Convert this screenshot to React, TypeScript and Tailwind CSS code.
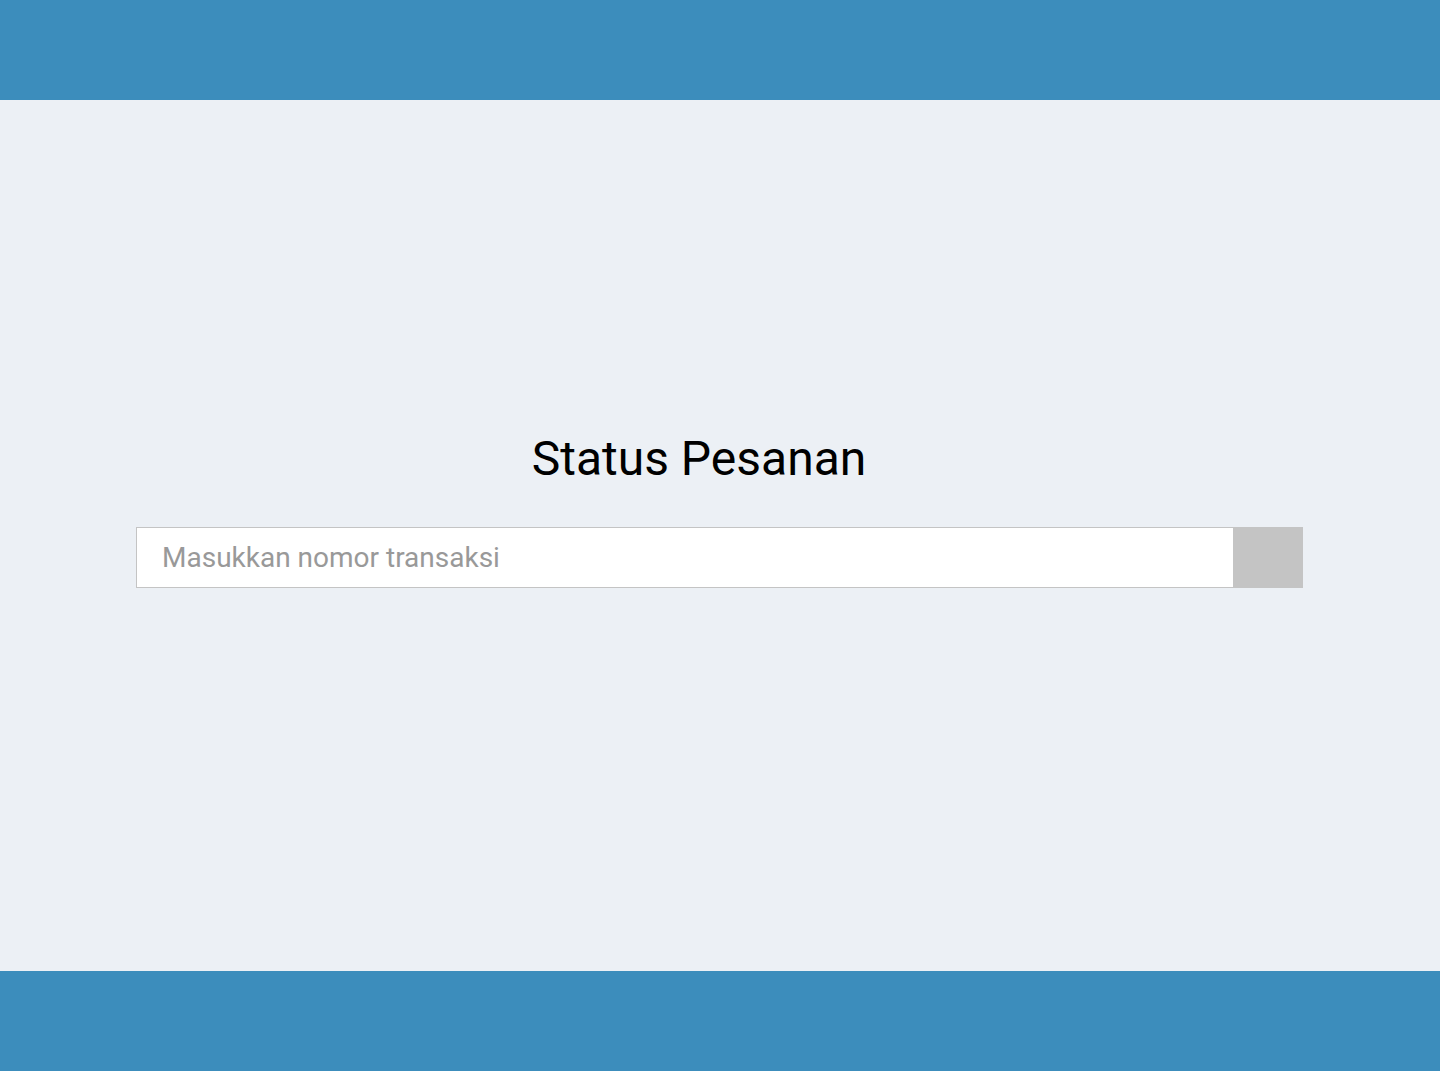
import React from "react";

export default function App() {
  return (
    <div className="min-h-screen flex flex-col bg-[#ecf0f5]" style={{ fontFamily: "Roboto, 'Liberation Sans', sans-serif" }}>
      <header className="h-[100px] bg-[#3c8dbc] shrink-0" />
      <main className="h-[871px] flex flex-col pt-[331px]">
        <h1 className="text-[48px] leading-[56px] text-black font-normal text-center pr-[42px]">Status Pesanan</h1>
        <div className="mt-[40px] ml-[136px] w-[1167px] flex h-[61px]">
          <input
            type="text"
            placeholder="Masukkan nomor transaksi"
            className="flex-1 min-w-0 h-full bg-white border border-[#c4c4c4] pl-[25px] pr-[10px] text-[28px] text-[#333] placeholder:text-[#999] outline-none"
          />
          <button className="w-[69px] h-full bg-[#c4c4c4]" />
        </div>
      </main>
      <footer className="h-[100px] bg-[#3c8dbc] shrink-0" />
    </div>
  );
}
